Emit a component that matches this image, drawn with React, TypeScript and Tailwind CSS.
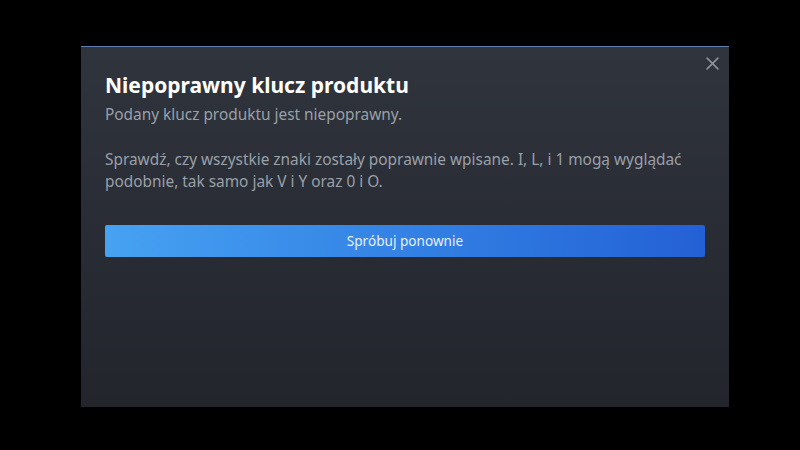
import React from "react";

export default function App() {
  return (
    <div className="w-[800px] h-[450px] bg-black pl-[81px] pt-[46px]" style={{ fontFamily: "'Noto Sans', Lato, sans-serif" }}>
      <div className="relative w-[648px] h-[361px] border-t border-[#5d7fb0] bg-gradient-to-b from-[#30343d] to-[#22252c] px-6 pt-[23px]">
        <button className="absolute right-[6px] top-[6px] text-[#8c939c] p-1">
          <svg width="13" height="13" viewBox="0 0 12 12" fill="none" stroke="currentColor" strokeWidth="1.5" strokeLinecap="round">
            <path d="M1 1L11 11M11 1L1 11" />
          </svg>
        </button>
        <h1 className="text-[21px] font-bold text-white leading-[30px]">Niepoprawny klucz produktu</h1>
        <p className="text-[15.4px] text-[#9aa0a8] leading-[22px] mt-[4px]">Podany klucz produktu jest niepoprawny.</p>
        <p className="text-[15.4px] text-[#9aa0a8] leading-[22px] mt-[23px] -mr-2">
          Sprawdź, czy wszystkie znaki zostały poprawnie wpisane. I, L, i 1 mogą wyglądać podobnie, tak samo jak V i Y oraz 0 i O.
        </p>
        <button className="block mt-[32px] w-full h-[32px] rounded-[2px] bg-gradient-to-r from-[#47a2f2] to-[#2460d5] text-[13.6px] text-[#e8eefa]">
          Spróbuj ponownie
        </button>
      </div>
    </div>
  );
}
